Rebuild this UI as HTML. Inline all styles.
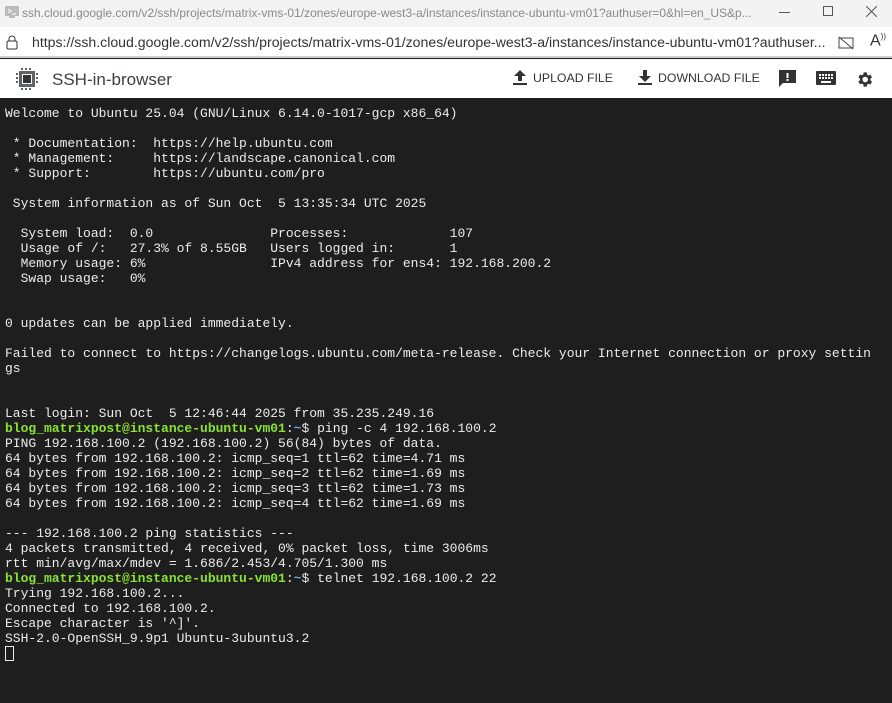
<!DOCTYPE html>
<html><head><meta charset="utf-8"><style>
*{margin:0;padding:0;box-sizing:border-box}
body{width:892px;height:703px;overflow:hidden;background:#1e1e1e;font-family:"Liberation Sans",sans-serif;position:relative}
#title{position:absolute;left:0;top:0;width:892px;height:27px;background:#f3f3f3;color:#8a8a8a;font-size:12px}
#addr{position:absolute;left:0;top:27px;width:892px;height:31px;background:#fff;color:#333;font-size:14.1px;border-bottom:2px solid #cfcfcf}
#tool{position:absolute;left:0;top:59px;width:892px;height:39px;background:#fff;color:#333}
#term{position:absolute;left:5px;top:106px;font-family:"Liberation Mono",monospace;font-size:13px;line-height:15px;color:#ececec;white-space:pre}
.g{color:#8ae234;font-weight:bold}.b{color:#729fcf;font-weight:bold}
.a{position:absolute}
</style></head><body>
<div id="title">
<svg class="a" style="left:4px;top:5px" width="16" height="14"><rect x="1" y="1" width="14" height="10" fill="#bbb"/><path d="M4 4l3 2-3 2M8 9h4" stroke="#fff" fill="none"/><rect x="5" y="11" width="6" height="2" fill="#bbb"/></svg>
<span class="a" style="left:22px;top:6px">ssh.cloud.google.com/v2/ssh/projects/matrix-vms-01/zones/europe-west3-a/instances/instance-ubuntu-vm01?authuser=0&amp;hl=en_US&amp;p...</span>
<div class="a" style="left:779px;top:12px;width:11px;height:1px;background:#555"></div>
<div class="a" style="left:823px;top:6px;width:10px;height:10px;border:1px solid #555"></div>
<svg class="a" style="left:866px;top:6px" width="11" height="11"><path d="M0 0L11 11M11 0L0 11" stroke="#555"/></svg>
</div>
<div id="addr">
<svg class="a" style="left:6px;top:8px" width="12" height="15"><path d="M3 6V4a3 3 0 0 1 6 0v2" stroke="#333" fill="none"/><rect x="1" y="6" width="10" height="8" rx="1.5" stroke="#333" fill="none"/></svg>
<span class="a" style="left:32px;top:7px">https://ssh.cloud.google.com/v2/ssh/projects/matrix-vms-01/zones/europe-west3-a/instances/instance-ubuntu-vm01?authuser...</span>
<svg class="a" style="left:838px;top:9px" width="16" height="14"><rect x="1" y="2" width="14" height="10" stroke="#444" fill="none"/><path d="M1 1L15 13" stroke="#444"/></svg>
<span class="a" style="left:870px;top:5px;font-size:16px">A<sup style="font-size:8px">))</sup></span>
</div>
<div id="tool">
<svg class="a" style="left:14px;top:7px" width="26" height="26"><g fill="#5f6368"><rect x="5" y="5" width="16" height="16"/><rect x="2" y="7" width="2" height="2"/><rect x="2" y="11" width="2" height="2"/><rect x="2" y="15" width="2" height="2"/><rect x="22" y="7" width="2" height="2"/><rect x="22" y="11" width="2" height="2"/><rect x="22" y="15" width="2" height="2"/><rect x="7" y="2" width="2" height="2"/><rect x="11" y="2" width="2" height="2"/><rect x="15" y="2" width="2" height="2"/><rect x="7" y="22" width="2" height="2"/><rect x="11" y="22" width="2" height="2"/><rect x="15" y="22" width="2" height="2"/></g><rect x="8" y="8" width="10" height="10" fill="#fff"/><rect x="9" y="9" width="8" height="8" fill="#333"/></svg>
<span class="a" style="left:52px;top:11px;font-size:17px;color:#3c4043">SSH-in-browser</span>
<svg class="a" style="left:513px;top:11px" width="14" height="16"><path d="M7 0L1 6h4v5h4V6h4z M0 13h14v2H0z" fill="#333"/></svg>
<span class="a" style="left:533px;top:12px;font-size:12.3px">UPLOAD FILE</span>
<svg class="a" style="left:638px;top:11px" width="14" height="16"><path d="M5 0h4v6h4L7 12 1 6h4z M0 13h14v2H0z" fill="#333"/></svg>
<span class="a" style="left:658px;top:12px;font-size:12.3px">DOWNLOAD FILE</span>
<svg class="a" style="left:779px;top:11px" width="18" height="18"><path d="M0 0h17v13H4l-4 4z" fill="#333"/><rect x="7.5" y="3" width="2" height="5" fill="#fff"/><rect x="7.5" y="9" width="2" height="2" fill="#fff"/></svg>
<svg class="a" style="left:816px;top:12px" width="20" height="14"><rect width="20" height="14" rx="1" fill="#333"/><g fill="#fff"><rect x="3" y="3" width="2" height="2"/><rect x="6" y="3" width="2" height="2"/><rect x="9" y="3" width="2" height="2"/><rect x="12" y="3" width="2" height="2"/><rect x="15" y="3" width="2" height="2"/><rect x="3" y="6" width="2" height="2"/><rect x="6" y="6" width="2" height="2"/><rect x="9" y="6" width="2" height="2"/><rect x="12" y="6" width="2" height="2"/><rect x="15" y="6" width="2" height="2"/><rect x="5" y="10" width="10" height="2"/></g></svg>
<svg class="a" style="left:855px;top:11px" width="19" height="19" viewBox="0 0 24 24"><path fill="#333" d="M19.4 13a7.5 7.5 0 0 0 0-2l2.1-1.6-2-3.5-2.5 1a7 7 0 0 0-1.7-1L14.9 3h-4l-.4 2.7a7 7 0 0 0-1.7 1l-2.5-1-2 3.5L6.4 11a7.5 7.5 0 0 0 0 2l-2.1 1.6 2 3.5 2.5-1a7 7 0 0 0 1.7 1l.4 2.9h4l.4-2.7a7 7 0 0 0 1.7-1l2.5 1 2-3.5zM12.9 15.5a3.5 3.5 0 1 1 0-7 3.5 3.5 0 0 1 0 7z"/></svg>
</div>
<div id="term">Welcome to Ubuntu 25.04 (GNU/Linux 6.14.0-1017-gcp x86_64)

 * Documentation:  https://help.ubuntu.com
 * Management:     https://landscape.canonical.com
 * Support:        https://ubuntu.com/pro

 System information as of Sun Oct  5 13:35:34 UTC 2025

  System load:  0.0               Processes:             107
  Usage of /:   27.3% of 8.55GB   Users logged in:       1
  Memory usage: 6%                IPv4 address for ens4: 192.168.200.2
  Swap usage:   0%


0 updates can be applied immediately.

Failed to connect to https://changelogs.ubuntu.com/meta-release. Check your Internet connection or proxy settin
gs


Last login: Sun Oct  5 12:46:44 2025 from 35.235.249.16
<span class="g">blog_matrixpost@instance-ubuntu-vm01</span>:<span class="b">~</span>$ ping -c 4 192.168.100.2
PING 192.168.100.2 (192.168.100.2) 56(84) bytes of data.
64 bytes from 192.168.100.2: icmp_seq=1 ttl=62 time=4.71 ms
64 bytes from 192.168.100.2: icmp_seq=2 ttl=62 time=1.69 ms
64 bytes from 192.168.100.2: icmp_seq=3 ttl=62 time=1.73 ms
64 bytes from 192.168.100.2: icmp_seq=4 ttl=62 time=1.69 ms

--- 192.168.100.2 ping statistics ---
4 packets transmitted, 4 received, 0% packet loss, time 3006ms
rtt min/avg/max/mdev = 1.686/2.453/4.705/1.300 ms
<span class="g">blog_matrixpost@instance-ubuntu-vm01</span>:<span class="b">~</span>$ telnet 192.168.100.2 22
Trying 192.168.100.2...
Connected to 192.168.100.2.
Escape character is '^]'.
SSH-2.0-OpenSSH_9.9p1 Ubuntu-3ubuntu3.2
<span style="display:inline-block;width:9px;height:15px;border:1px solid #e8e8e8;vertical-align:-3px"></span></div>
</body></html>
